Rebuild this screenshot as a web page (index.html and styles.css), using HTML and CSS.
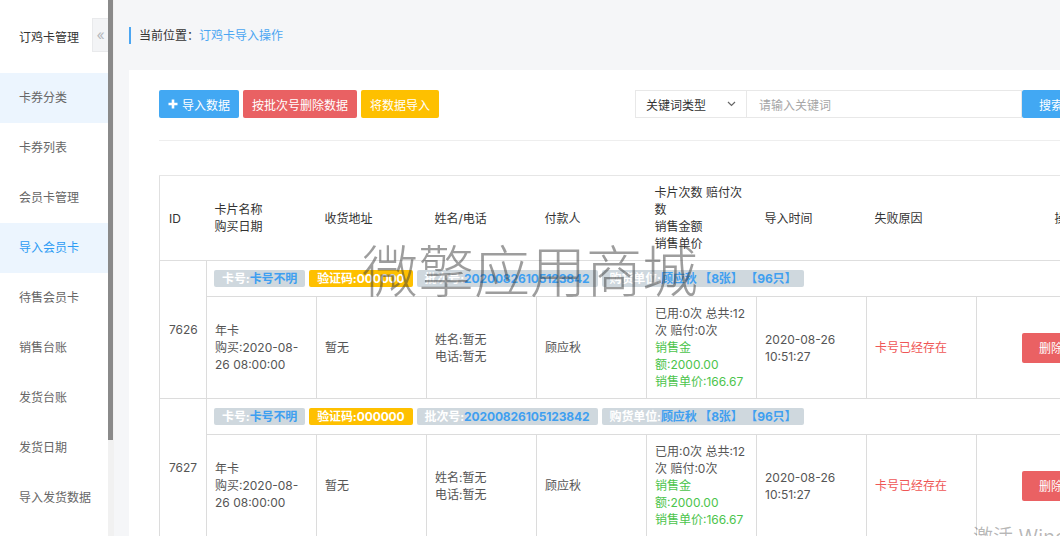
FILE: index.html
```html
<!DOCTYPE html>
<html lang="zh-CN">
<head>
<meta charset="utf-8">
<title>订鸡卡导入操作</title>
<link rel="stylesheet" href="styles.css">
</head>
<body>
<div class="app">
  <aside class="sidebar">
    <div class="side-head">
      <span class="side-title">订鸡卡管理</span>
      <span class="collapse">«</span>
    </div>
    <ul class="menu">
      <li class="menu-item hover">卡券分类</li>
      <li class="menu-item">卡券列表</li>
      <li class="menu-item">会员卡管理</li>
      <li class="menu-item active">导入会员卡</li>
      <li class="menu-item">待售会员卡</li>
      <li class="menu-item">销售台账</li>
      <li class="menu-item">发货台账</li>
      <li class="menu-item">发货日期</li>
      <li class="menu-item">导入发货数据</li>
    </ul>
  </aside>
  <div class="scrollbar"><div class="thumb"></div></div>
  <main class="main">
    <div class="crumb">
      <span class="crumb-inner"><span class="crumb-label">当前位置：</span><span class="crumb-link">订鸡卡导入操作</span></span>
    </div>
    <section class="panel">
      <div class="toolbar">
        <div class="btns">
          <button class="btn btn-blue"><svg class="plus" width="10" height="10" viewBox="0 0 10 10"><path d="M5 0.5v9M0.5 5h9" stroke="#fff" stroke-width="2.6"/></svg>导入数据</button>
          <button class="btn btn-red">按批次号删除数据</button>
          <button class="btn btn-yellow">将数据导入</button>
        </div>
        <div class="search">
          <div class="select">关键词类型<svg class="chev" width="9" height="6" viewBox="0 0 9 6"><path d="M1 1l3.5 3.5L8 1" fill="none" stroke="#666" stroke-width="1.2"/></svg></div>
          <div class="input">请输入关键词</div>
          <button class="search-btn">搜索</button>
        </div>
      </div>
      <table class="grid">
        <colgroup>
          <col class="c-id"><col class="c-w"><col class="c-w"><col class="c-w"><col class="c-w"><col class="c-w"><col class="c-w"><col class="c-w"><col class="c-op">
        </colgroup>
        <thead>
          <tr>
            <th>ID</th>
            <th>卡片名称<br>购买日期</th>
            <th>收货地址</th>
            <th>姓名/电话</th>
            <th>付款人</th>
            <th>卡片次数 赔付次数<br>销售金额<br>销售单价</th>
            <th>导入时间</th>
            <th>失败原因</th>
            <th class="th-op">操作</th>
          </tr>
        </thead>
        <tbody>
          <tr>
            <td class="id" rowspan="2">7626</td>
            <td class="badges" colspan="8">
              <div class="badge-row">
                <span class="badge gray">卡号:<span class="val">卡号不明</span></span>
                <span class="badge yellow">验证码:000000</span>
                <span class="badge gray">批次号:<span class="val">20200826105123842</span></span>
                <span class="badge gray">购货单位:<span class="val">顾应秋 【8张】 【96只】</span></span>
              </div>
            </td>
          </tr>
          <tr class="data">
            <td>年卡<br>购买:2020-08-26 08:00:00</td>
            <td>暂无</td>
            <td>姓名:暂无<br>电话:暂无</td>
            <td>顾应秋</td>
            <td>已用:0次 总共:12次 赔付:0次<br><span class="green">销售金额:2000.00<br>销售单价:166.67</span></td>
            <td>2020-08-26 10:51:27</td>
            <td class="red">卡号已经存在</td>
            <td class="op"><button class="del">删除</button></td>
          </tr>
          <tr>
            <td class="id" rowspan="2">7627</td>
            <td class="badges" colspan="8">
              <div class="badge-row">
                <span class="badge gray">卡号:<span class="val">卡号不明</span></span>
                <span class="badge yellow">验证码:000000</span>
                <span class="badge gray">批次号:<span class="val">20200826105123842</span></span>
                <span class="badge gray">购货单位:<span class="val">顾应秋 【8张】 【96只】</span></span>
              </div>
            </td>
          </tr>
          <tr class="data">
            <td>年卡<br>购买:2020-08-26 08:00:00</td>
            <td>暂无</td>
            <td>姓名:暂无<br>电话:暂无</td>
            <td>顾应秋</td>
            <td>已用:0次 总共:12次 赔付:0次<br><span class="green">销售金额:2000.00<br>销售单价:166.67</span></td>
            <td>2020-08-26 10:51:27</td>
            <td class="red">卡号已经存在</td>
            <td class="op"><button class="del">删除</button></td>
          </tr>
        </tbody>
      </table>
    </section>
  </main>
  <div class="watermark">微擎应用商城</div>
  <div class="activate">激活 Windows</div>
</div>
</body>
</html>
```

FILE: styles.css
```css
* { box-sizing: border-box; }
html, body { margin: 0; padding: 0; }
body {
  font-family: Inter, "Noto Sans CJK SC", sans-serif;
  font-size: 12px;
  color: #555;
  background: #f5f6f8;
}
.app {
  position: relative;
  display: flex;
  width: 1060px;
  height: 536px;
  overflow: hidden;
  background: #f5f6f8;
}
.sidebar {
  width: 108px;
  flex: none;
  background: #fff;
}
.side-head {
  height: 73px;
  display: flex;
  align-items: center;
  padding-left: 19px;
}
.side-title { color: #333; font-size: 12px; }
.collapse {
  margin-left: auto;
  width: 16px;
  height: 34px;
  margin-top: -4px;
  background: #f3f4f6;
  border: 1px solid #e9eaec;
  border-right: none;
  color: #b5b8bd;
  font-size: 14px;
  display: flex;
  align-items: center;
  justify-content: center;
}
.menu { list-style: none; margin: 0; padding: 0; }
.menu-item {
  height: 50px;
  line-height: 50px;
  padding-left: 19px;
  color: #666;
}
.menu-item.hover { background: #ecf5fe; }
.menu-item.active { background: #ecf5fe; color: #2d9cf4; }
.scrollbar {
  width: 6px;
  flex: none;
  background: #f1f1f1;
}
.thumb {
  width: 5px;
  height: 440px;
  background: #8a8a8a;
}
.main {
  flex: 1;
  min-width: 0;
  padding-left: 15px;
  overflow: hidden;
}
.crumb {
  height: 70px;
  display: flex;
  align-items: center;
}
.crumb-inner {
  border-left: 2px solid #4ba6f2;
  padding-left: 8px;
  line-height: 16px;
  padding-top: 1px;
}
.crumb-label { color: #333; }
.crumb-link { color: #4ba6f2; }
.panel {
  width: 1060px;
  background: #fff;
  padding: 20px 30px;
  min-height: 600px;
}
.toolbar {
  display: flex;
  align-items: center;
  padding-bottom: 22px;
  border-bottom: 1px solid #eeeeee;
}
.btns { display: flex; gap: 4px; }
.btn {
  height: 28px;
  padding: 0 9px;
  border: none;
  border-radius: 2px;
  color: #fff;
  font-family: inherit;
  font-size: 12px;
  display: flex;
  align-items: center;
}
.plus { margin-right: 4px; }
.btn-blue { background: #42a8f3; }
.btn-red { background: #e96163; }
.btn-yellow { background: #fec000; }
.search {
  display: flex;
  margin-left: 196px;
  height: 28px;
}
.select {
  width: 112px;
  border: 1px solid #e8e8e8;
  display: flex;
  align-items: center;
  padding: 0 10px;
  color: #333;
  justify-content: space-between;
}
.input {
  width: 275px;
  border: 1px solid #e8e8e8;
  border-left: none;
  display: flex;
  align-items: center;
  padding-left: 12px;
  color: #a6a6a6;
}
.search-btn {
  border: none;
  background: #42a8f3;
  color: #fff;
  font-family: inherit;
  font-size: 12px;
  padding: 0 17px;
  border-radius: 2px 0 0 2px;
}
.grid {
  margin-top: 34px;
  table-layout: fixed;
  border-collapse: collapse;
  width: 997px;
  border-top: 1px solid #e6e6e6;
  border-left: 1px solid #e0e0e0;
}
.c-id { width: 47px; }
.c-w { width: 110px; }
.c-op { width: 180px; }
.grid th {
  font-weight: normal;
  text-align: left;
  color: #333;
  padding: 8px;
  line-height: 17px;
  vertical-align: middle;
  border-bottom: 1px solid #dedede;
}
.grid th:first-child { padding-left: 9px; }
.grid .th-op { text-align: center; }
.grid td {
  border: 1px solid #dcdcdc;
  padding: 8px;
  line-height: 17px;
  vertical-align: middle;
  color: #555;
}
.grid td.id { padding-left: 9px; }
.grid td.badges { padding: 9px 8px 9px 7px; }
.badge-row { display: flex; gap: 4px; }
.badge {
  height: 17px;
  line-height: 17px;
  padding: 0 8px;
  border-radius: 2px;
  font-weight: bold;
  color: #fff;
  white-space: nowrap;
  letter-spacing: -0.12px;
}
.badge.gray { background: #cfd8de; }
.badge.yellow { background: #fec000; }
.badge .val { color: #3f9ff0; }
.green { color: #4cc44c; }
.grid td.red { color: #ef5656; }
.grid td.op { padding-left: 45px; }
.del {
  height: 30px;
  padding: 0 17px;
  border: none;
  border-radius: 2px;
  background: #ea6163;
  color: #fff;
  font-family: inherit;
  font-size: 12px;
}
.watermark {
  position: absolute;
  left: 362px;
  top: 238px;
  font-family: "Noto Sans CJK SC", sans-serif;
  font-weight: 300;
  font-size: 56px;
  line-height: 60px;
  color: rgba(60, 60, 60, 0.5);
  white-space: nowrap;
  pointer-events: none;
}
.activate {
  position: absolute;
  left: 973px;
  top: 526px;
  font-size: 20px;
  line-height: 22px;
  color: rgba(0, 0, 0, 0.28);
  white-space: nowrap;
}
```
